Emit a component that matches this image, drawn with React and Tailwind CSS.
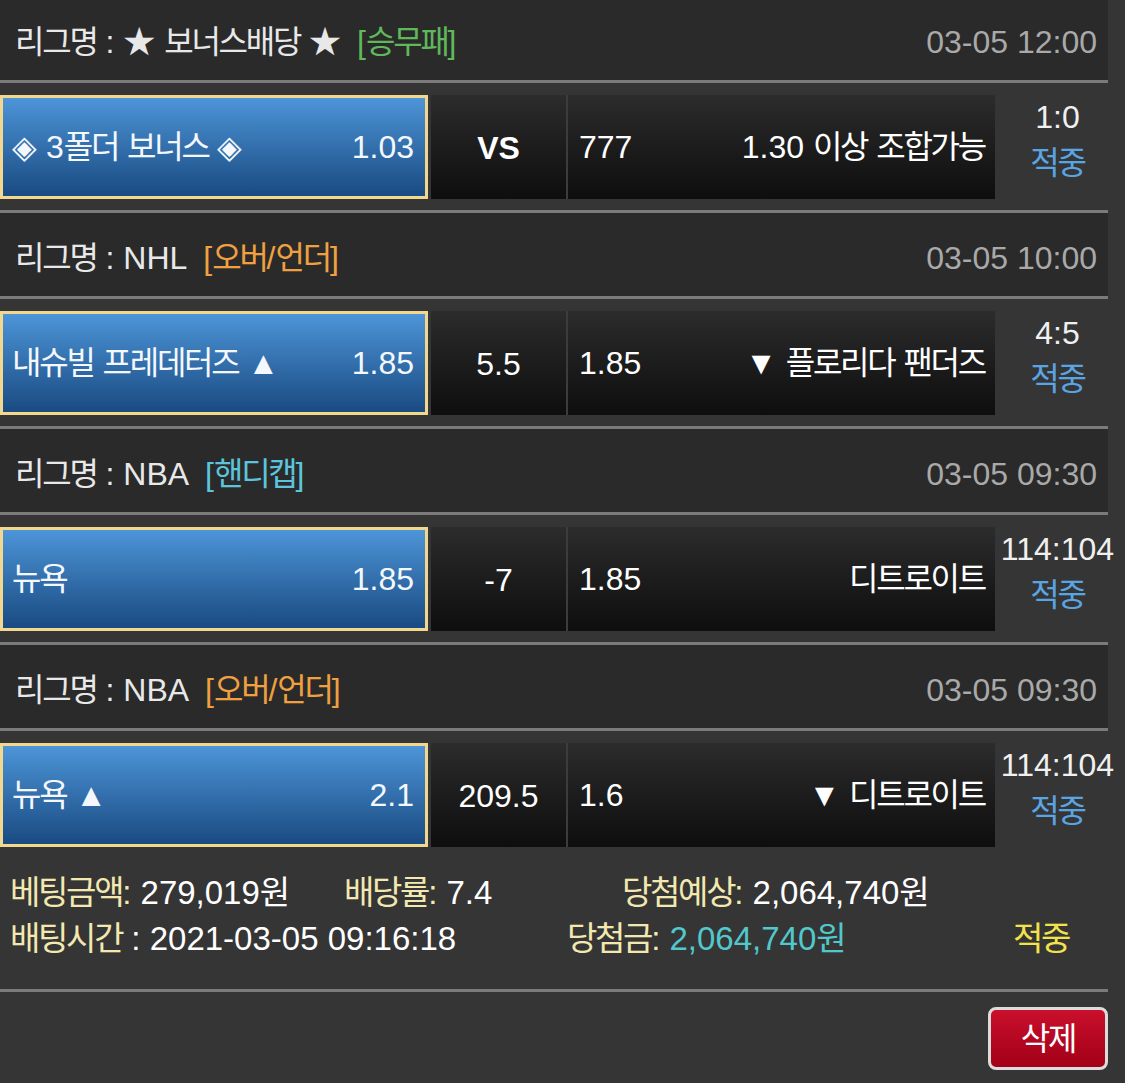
import React from "react";

function T({ text }) {
  const parts = text.split(/([\uAC00-\uD7A3]+)/);
  return (
    <>
      {parts.map((p, i) =>
        /[\uAC00-\uD7A3]/.test(p) ? (
          <span key={i} className="tracking-[-0.07em]">
            {p}
          </span>
        ) : (
          <span key={i}>{p}</span>
        )
      )}
    </>
  );
}

const groups = [
  {
    league: "★ 보너스배당 ★",
    type: "[승무패]",
    typeCls: "text-[#5fb85a]",
    date: "03-05 12:00",
    home: "◈ 3폴더 보너스 ◈",
    homeOdds: "1.03",
    mid: "VS",
    bold: true,
    awayOdds: "777",
    away: "1.30 이상 조합가능",
    score: "1:0",
  },
  {
    league: "NHL",
    type: "[오버/언더]",
    typeCls: "text-[#f0a040]",
    date: "03-05 10:00",
    home: "내슈빌 프레데터즈 ▲",
    homeOdds: "1.85",
    mid: "5.5",
    awayOdds: "1.85",
    away: "▼ 플로리다 팬더즈",
    score: "4:5",
  },
  {
    league: "NBA",
    type: "[핸디캡]",
    typeCls: "text-[#5cc4dc]",
    date: "03-05 09:30",
    home: "뉴욕",
    homeOdds: "1.85",
    mid: "-7",
    awayOdds: "1.85",
    away: "디트로이트",
    score: "114:104",
  },
  {
    league: "NBA",
    type: "[오버/언더]",
    typeCls: "text-[#f0a040]",
    date: "03-05 09:30",
    home: "뉴욕 ▲",
    homeOdds: "2.1",
    mid: "209.5",
    awayOdds: "1.6",
    away: "▼ 디트로이트",
    score: "114:104",
  },
];

function Line() {
  return <div className="w-[1108px] h-[3px] bg-[#7b7b7b]" />;
}

function Group({ g, first, last }) {
  return (
    <div>
      <div
        className={
          "w-[1108px] bg-[#2a2a2a] flex items-center justify-between pl-[15px] pr-[11px] " +
          (first ? "h-[80px] pt-[4px]" : "h-[83px] pt-[7px]")
        }
      >
        <div className="flex items-center text-[#e8e8e8]">
          <span>
            <T text={"리그명 : " + g.league} />
          </span>
          <span className={"ml-[16px] " + g.typeCls}>
            <T text={g.type} />
          </span>
        </div>
        <span className="text-[#a9a9a9]">{g.date}</span>
      </div>
      <Line />
      <div className={"flex pt-[12px] " + (last ? "pb-0" : "pb-[11px]")}>
        <div className="w-[428px] h-[104px] border-[3px] border-[#f2d88e] bg-linear-to-b from-[#4d95d8] to-[#1a4b82] flex items-center justify-between pl-[9px] pr-[11px] text-[#f4f8fc]">
          <span>
            <T text={g.home} />
          </span>
          <span>{g.homeOdds}</span>
        </div>
        <div
          className={
            "ml-[3px] w-[135px] h-[104px] bg-linear-to-b from-[#2c2c2c] to-[#0e0e0e] flex items-center justify-center pt-[2px] text-white " +
            (g.bold ? "font-bold" : "")
          }
        >
          {g.mid}
        </div>
        <div className="w-[2px] h-[104px] bg-[#3c3c3c]" />
        <div className="w-[427px] h-[104px] bg-linear-to-b from-[#2c2c2c] to-[#0e0e0e] flex items-center justify-between pl-[11px] pr-[10px] text-white">
          <span>{g.awayOdds}</span>
          <span>
            <T text={g.away} />
          </span>
        </div>
        <div className="w-[125px] flex flex-col items-center -mt-[1px]">
          <span className="leading-[46px] text-[#f0f0f0]">{g.score}</span>
          <span className="leading-[46px] text-[#5ba4e2]">
            <T text="적중" />
          </span>
        </div>
      </div>
      {!last && <Line />}
    </div>
  );
}

export default function App() {
  return (
    <div className="w-[1125px] h-[1083px] overflow-hidden bg-[#353535] font-['Liberation_Sans','Noto_Sans_CJK_KR',sans-serif] text-[32px] leading-none">
      {groups.map((g, i) => (
        <Group key={i} g={g} first={i === 0} last={i === groups.length - 1} />
      ))}
      <div className="pt-[22px] pb-[28px] pl-[10px] text-[33px]">
        <div className="flex h-[46px] items-center">
          <span className="w-[334px] whitespace-nowrap">
            <span className="text-[#f3e9b0]">
              <T text="베팅금액:" />
            </span>
            <span className="text-white"> 279,019</span>
            <span className="text-white">
              <T text="원" />
            </span>
          </span>
          <span className="w-[278px] whitespace-nowrap">
            <span className="text-[#f3e9b0]">
              <T text="배당률:" />
            </span>
            <span className="text-white"> 7.4</span>
          </span>
          <span className="whitespace-nowrap">
            <span className="text-[#f3e9b0]">
              <T text="당첨예상:" />
            </span>
            <span className="text-white">
              <T text=" 2,064,740원" />
            </span>
          </span>
        </div>
        <div className="flex h-[46px] items-center">
          <span className="w-[557px] whitespace-nowrap">
            <span className="text-[#f3e9b0]">
              <T text="배팅시간" />
            </span>
            <span className="text-white"> : 2021-03-05 09:16:18</span>
          </span>
          <span className="w-[446px] whitespace-nowrap">
            <span className="text-[#f3e9b0]">
              <T text="당첨금:" />
            </span>
            <span className="text-[#52c8cc]">
              <T text=" 2,064,740원" />
            </span>
          </span>
          <span className="text-[#f2e24c]">
            <T text="적중" />
          </span>
        </div>
      </div>
      <Line />
      <div className="flex justify-end pr-[17px] pt-[15px]">
        <div className="w-[120px] h-[63px] rounded-[8px] border-[3px] border-[#dcdcdc] bg-linear-to-b from-[#c9102c] to-[#a30018] flex items-center justify-center text-white text-[32px]">
          <T text="삭제" />
        </div>
      </div>
    </div>
  );
}
